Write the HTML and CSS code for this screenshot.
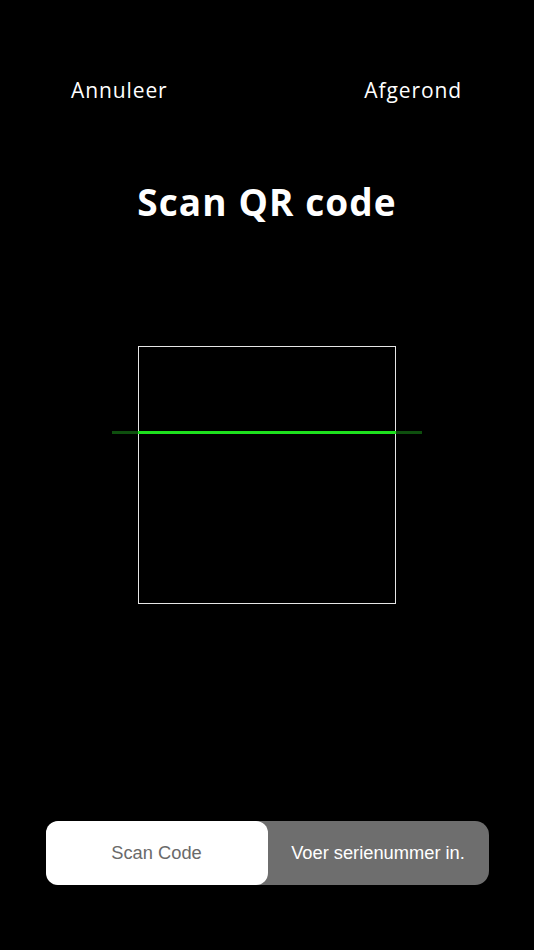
FILE: index.html
```html
<!DOCTYPE html>
<html>
<head>
<meta charset="utf-8">
<link rel="stylesheet" href="styles.css">
</head>
<body>
<div class="screen">
  <div class="topbar">
    <span class="nav-btn">Annuleer</span>
    <span class="nav-btn">Afgerond</span>
  </div>
  <h1 class="title">Scan QR code</h1>
  <div class="scanner">
    <div class="frame"></div>
    <div class="laser"></div>
  </div>
  <div class="segmented">
    <div class="seg seg-active">Scan Code</div>
    <div class="seg">Voer serienummer in.</div>
  </div>
</div>
</body>
</html>
```
FILE: styles.css
```css
html, body {
  margin: 0;
  padding: 0;
  background: #000;
}
.screen {
  width: 534px;
  height: 950px;
  background: #000;
  display: flex;
  flex-direction: column;
  align-items: center;
  font-family: "Open Sans", "DejaVu Sans", sans-serif;
  color: #fff;
}
.topbar {
  width: 100%;
  box-sizing: border-box;
  display: flex;
  justify-content: space-between;
  padding: 76px 72px 0 71px;
}
.nav-btn {
  font-size: 21px;
  line-height: 28px;
  letter-spacing: 0.9px;
}
.title {
  margin: 76px 0 0;
  font-size: 37px;
  line-height: 44px;
  font-weight: 700;
  letter-spacing: 1.1px;
}
.scanner {
  position: relative;
  width: 310px;
  margin-top: 122px;
  display: flex;
  justify-content: center;
}
.frame {
  width: 258px;
  height: 258px;
  box-sizing: border-box;
  border: 1.5px solid #e6e6e6;
}
.laser {
  position: absolute;
  left: 0;
  right: 0;
  top: 85px;
  height: 3px;
  background: linear-gradient(to right,
    #0e4f0e 0, #0e4f0e 26px,
    #1ee01e 26px, #1ee01e 284px,
    #0e4f0e 284px, #0e4f0e 100%);
}
.segmented {
  margin-top: 217px;
  width: 443px;
  height: 64px;
  border-radius: 14px;
  background: #6e6e6e;
  display: flex;
  font-family: "Liberation Sans", Arial, sans-serif;
  font-size: 18.3px;
}
.seg {
  flex: 1;
  display: flex;
  align-items: center;
  justify-content: center;
  color: #fff;
}
.seg-active {
  flex: 0 0 222px;
  background: #fff;
  color: #6a6a6a;
  border-radius: 12px;
}
```
